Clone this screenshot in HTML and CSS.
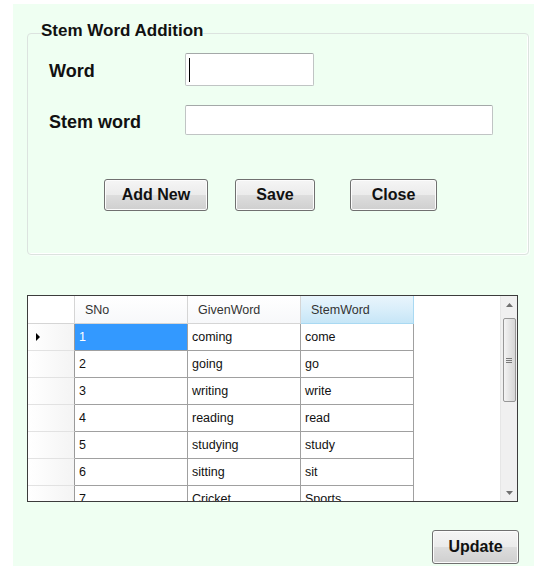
FILE: index.html
```html
<!DOCTYPE html>
<html lang="en">
<head>
<meta charset="utf-8">
<title>Stem Word Addition</title>
<link rel="stylesheet" href="styles.css">
</head>
<body>
<div class="window">
  <fieldset class="group">
    <legend class="group-title">Stem Word Addition</legend>
    <div class="field field-word">
      <span class="field-label">Word</span>
      <div class="textbox textbox-short"><span class="caret"></span></div>
    </div>
    <div class="field field-stem">
      <span class="field-label">Stem word</span>
      <div class="textbox textbox-long"></div>
    </div>
    <div class="actions">
      <button class="btn btn-add" type="button">Add New</button>
      <button class="btn btn-save" type="button">Save</button>
      <button class="btn btn-close" type="button">Close</button>
    </div>
  </fieldset>

  <div class="grid">
    <div class="grid-body">
      <div class="grid-row grid-head">
        <div class="rowhead"></div>
        <div class="colhead">SNo</div>
        <div class="colhead">GivenWord</div>
        <div class="colhead colhead-hot">StemWord</div>
      </div>
      <div class="grid-row">
        <div class="rowhead"><span class="current-mark"></span></div>
        <div class="cell cell-selected">1</div>
        <div class="cell">coming</div>
        <div class="cell">come</div>
      </div>
      <div class="grid-row">
        <div class="rowhead"></div>
        <div class="cell">2</div>
        <div class="cell">going</div>
        <div class="cell">go</div>
      </div>
      <div class="grid-row">
        <div class="rowhead"></div>
        <div class="cell">3</div>
        <div class="cell">writing</div>
        <div class="cell">write</div>
      </div>
      <div class="grid-row">
        <div class="rowhead"></div>
        <div class="cell">4</div>
        <div class="cell">reading</div>
        <div class="cell">read</div>
      </div>
      <div class="grid-row">
        <div class="rowhead"></div>
        <div class="cell">5</div>
        <div class="cell">studying</div>
        <div class="cell">study</div>
      </div>
      <div class="grid-row">
        <div class="rowhead"></div>
        <div class="cell">6</div>
        <div class="cell">sitting</div>
        <div class="cell">sit</div>
      </div>
      <div class="grid-row">
        <div class="rowhead"></div>
        <div class="cell">7</div>
        <div class="cell">Cricket</div>
        <div class="cell">Sports</div>
      </div>
    </div>
    <div class="vscroll">
      <div class="vscroll-arrow">
        <svg width="7" height="4" viewBox="0 0 7 4"><path d="M0 4 L3.5 0 L7 4Z" fill="#707070"/></svg>
      </div>
      <div class="vscroll-thumb">
        <span class="grip"></span>
      </div>
      <div class="vscroll-track"></div>
      <div class="vscroll-arrow">
        <svg width="7" height="4" viewBox="0 0 7 4"><path d="M0 0 L3.5 4 L7 0Z" fill="#707070"/></svg>
      </div>
    </div>
  </div>

  <div class="footer">
    <button class="btn btn-update" type="button">Update</button>
  </div>
</div>
</body>
</html>
```

FILE: styles.css
```css
html, body {
  margin: 0;
  background: #ffffff;
}

body {
  font-family: "Liberation Sans", Arial, sans-serif;
  color: #111;
}

/* form surface */
.window {
  margin: 4px 0 0 13px;
  height: 562px;
  box-sizing: border-box;
  padding: 17px 5px 0 14px;
  background: #effff2;
  display: flex;
  flex-direction: column;
}

/* group box */
.group {
  margin: 0;
  padding: 0 0 43px 0;
  width: 502px;
  box-sizing: border-box;
  border: 1px solid #dce3df;
  border-radius: 4px;
  box-shadow: inset -1px -1px 0 #ffffff, 1px 1px 0 #f8fffa;
}

.group-title {
  margin-left: 13px;
  padding: 0 0 4px 0;
  font-weight: bold;
  font-size: 17px;
  line-height: 20px;
  color: #111;
}

.field {
  display: flex;
  align-items: center;
  padding-left: 21px;
}

.field-word {
  margin-top: 8px;
}

.field-stem {
  margin-top: 19px;
}

.field-label {
  width: 136px;
  font-weight: bold;
  font-size: 18px;
  padding-top: 4px;
  color: #111;
}

.textbox {
  box-sizing: border-box;
  background: #ffffff;
  border: 1px solid #c0c4c4;
  border-top-color: #a4a8a8;
  border-radius: 2px;
  display: flex;
  align-items: center;
  padding-left: 3px;
}

.textbox-short {
  width: 129px;
  height: 33px;
}

.textbox-long {
  width: 308px;
  height: 30px;
}

.caret {
  width: 1px;
  height: 24px;
  background: #000;
}

.actions {
  display: flex;
  margin-top: 44px;
  padding-left: 76px;
}

/* push buttons */
.btn {
  box-sizing: border-box;
  height: 32px;
  padding: 0;
  border: 1px solid #707070;
  border-radius: 3px;
  background: linear-gradient(#f5f5f5 0%, #ebebeb 50%, #dddddd 51%, #cfcfcf 100%);
  box-shadow: inset 0 0 0 1px #fcfcfc;
  font-family: "Liberation Sans", Arial, sans-serif;
  font-weight: bold;
  font-size: 16px;
  color: #111;
}

.btn-add {
  width: 104px;
}

.btn-save {
  width: 80px;
  margin-left: 27px;
}

.btn-close {
  width: 87px;
  margin-left: 35px;
}

/* data grid */
.grid {
  margin-top: 40px;
  width: 491px;
  height: 207px;
  box-sizing: border-box;
  border: 1px solid #3c3c3c;
  background: #ffffff;
  display: flex;
}

.grid-body {
  flex: 1;
  overflow: hidden;
  font-size: 12.5px;
}

.grid-row {
  display: flex;
  height: 27px;
}

.grid-head {
  height: 28px;
}

.rowhead {
  box-sizing: border-box;
  width: 47px;
  flex: none;
  border-right: 1px solid #9a9a9a;
  border-bottom: 1px solid #e2e2e2;
  background: linear-gradient(to right, #ffffff, #f4f4f4);
  display: flex;
  align-items: center;
  padding-left: 8px;
}

.grid-head .rowhead {
  border-right-color: #d5d5d5;
  border-bottom-color: #d5d5d5;
  background: #ffffff;
}

.current-mark {
  width: 0;
  height: 0;
  border-top: 4px solid transparent;
  border-bottom: 4px solid transparent;
  border-left: 4px solid #000;
}

.colhead {
  box-sizing: border-box;
  width: 113px;
  flex: none;
  padding-left: 10px;
  display: flex;
  align-items: center;
  color: #333;
  border-right: 1px solid #d5d5d5;
  border-bottom: 1px solid #d5d5d5;
  background: linear-gradient(#ffffff, #f7f8fa);
}

.colhead-hot {
  border-right-color: #a9d9f2;
  border-bottom-color: #a9d9f2;
  background: linear-gradient(#e9f5fc 0%, #d9eefa 50%, #c6e6f7 100%);
}

.cell {
  box-sizing: border-box;
  width: 113px;
  flex: none;
  padding-left: 4px;
  display: flex;
  align-items: center;
  color: #111;
  border-right: 1px solid #a0a0a0;
  border-bottom: 1px solid #a0a0a0;
}

.cell-selected {
  background: #3399ff;
  color: #ffffff;
}

/* vertical scroll bar */
.vscroll {
  width: 16px;
  flex: none;
  background: #f0f0f0;
  border-left: 1px solid #e6e6e6;
  display: flex;
  flex-direction: column;
  align-items: center;
}

.vscroll-arrow {
  height: 17px;
  width: 100%;
  display: flex;
  align-items: center;
  justify-content: center;
}

.vscroll-thumb {
  margin-top: 5px;
  width: 13px;
  height: 84px;
  box-sizing: border-box;
  border: 1px solid #979797;
  border-radius: 2px;
  background: linear-gradient(to right, #f4f4f4, #e4e4e4 50%, #d6d6d6);
  display: flex;
  align-items: center;
  justify-content: center;
}

.grip {
  width: 6px;
  height: 5px;
  background: repeating-linear-gradient(#7a7a7a 0 1px, transparent 1px 2px);
}

.vscroll-track {
  flex: 1;
}

.footer {
  display: flex;
  justify-content: flex-end;
  padding-right: 10px;
  margin-top: 28px;
}

.btn-update {
  width: 87px;
  height: 34px;
}
```
